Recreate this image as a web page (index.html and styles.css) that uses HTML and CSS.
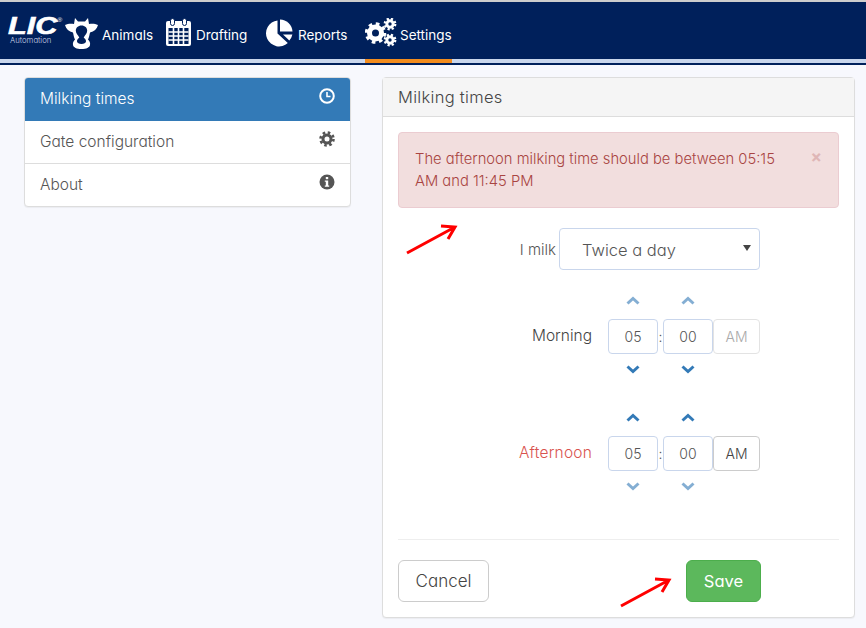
FILE: index.html
```html
<!DOCTYPE html>
<html lang="en">
<head>
  <meta charset="UTF-8">
  <title>Milking times</title>
  <link rel="stylesheet" href="styles.css">
</head>
<body>
  <div class="topbar">
    <div class="logo">
      <span class="logo-lic">LIC<sup class="logo-reg">®</sup></span>
      <span class="logo-sub">Automation</span>
    </div>
    <a class="nav-item nav-animals">
      <svg width="33" height="32" viewBox="0 0 33 32">
        <path fill="#fff" d="M10 1l3 3.500h7l3-3.500 1 6c3-.5 6-.5 9 1-1 4-4 6.500-8 7.500-.5 2.500-1 5-2 7 1.500 1.500 2.500 3.500 2 5.500-.5 2.500-3.500 4-8.500 4s-8-1.500-8.500-4c-.5-2 .5-4 2-5.500-1-2-1.500-4.500-2-7-4-1-7-3.500-8-7.500 3-1.500 6-1.500 9-1z"/>
        <path fill="#00205b" d="M16.500 8.500c3.500 0 5.700 2.300 5.700 5.300 0 3-2.700 4.700-3.500 7 1.600.8 2.500 2.300 2.300 3.700-.2 1.500-2 2.500-4.500 2.500s-4.300-1-4.500-2.500c-.2-1.400.7-2.900 2.300-3.700-.8-2.300-3.500-4-3.500-7 0-3 2.200-5.300 5.700-5.300z"/>
      </svg>
      <span>Animals</span>
    </a>
    <a class="nav-item nav-drafting">
      <svg width="27" height="29" viewBox="0 0 27 29">
        <rect x="1" y="3" width="25" height="25" rx="2" fill="#fff"/>
        <rect x="3.500" y="10" width="20" height="16" fill="#00205b"/>
        <path stroke="#fff" stroke-width="1.600" d="M8.500 10v16M13.500 10v16M18.500 10v16M3.500 14h20M3.500 18h20M3.500 22h20"/>
        <rect x="5.500" y="0.500" width="4" height="7" rx="2" fill="#fff" stroke="#00205b"/>
        <rect x="17.500" y="0.500" width="4" height="7" rx="2" fill="#fff" stroke="#00205b"/>
      </svg>
      <span>Drafting</span>
    </a>
    <a class="nav-item nav-reports">
      <svg width="28" height="28" viewBox="0 0 28 28">
        <path fill="#fff" d="M12.500 1.500A13 13 0 1 0 22.800 24L12.500 14.500z"/>
        <path fill="#fff" d="M15 0.500A13 13 0 0 1 27.500 12.500H15z"/>
        <path fill="#fff" d="M27.400 15.500A13 13 0 0 1 24.300 21.500L18 15.500z"/>
      </svg>
      <span>Reports</span>
    </a>
    <a class="nav-item nav-settings active">
      <svg width="32" height="29" viewBox="0 0 32 29">
        <g fill="none" stroke="#fff">
          <circle cx="10.500" cy="15" r="6" stroke-width="5"/>
          <circle cx="10.500" cy="15" r="9" stroke-width="3.500" stroke-dasharray="3.500 3.570"/>
          <circle cx="25" cy="6" r="3.200" stroke-width="3"/>
          <circle cx="25" cy="6" r="5.300" stroke-width="2.200" stroke-dasharray="2.200 2"/>
          <circle cx="25" cy="22" r="3.200" stroke-width="3"/>
          <circle cx="25" cy="22" r="5.300" stroke-width="2.200" stroke-dasharray="2.200 2"/>
        </g>
      </svg>
      <span>Settings</span>
    </a>
  </div>
  <div class="stripe"></div>

  <div class="content">
    <div class="side-list">
      <a class="side-item active">
        <span>Milking times</span>
        <svg class="side-icon" width="16" height="16" viewBox="0 0 16 16">
          <circle cx="8" cy="8" r="6.800" fill="none" stroke="currentColor" stroke-width="2"/>
          <path d="M8 4v4.500h3.500" fill="none" stroke="currentColor" stroke-width="1.600"/>
        </svg>
      </a>
      <a class="side-item">
        <span>Gate configuration</span>
        <svg class="side-icon" width="16" height="16" viewBox="0 0 16 16">
          <g fill="none" stroke="currentColor">
            <circle cx="8" cy="8" r="4" stroke-width="3"/>
            <circle cx="8" cy="8" r="6.500" stroke-width="2.600" stroke-dasharray="2.550 2.550"/>
          </g>
        </svg>
      </a>
      <a class="side-item">
        <span>About</span>
        <svg class="side-icon" width="16" height="16" viewBox="0 0 16 16">
          <circle cx="8" cy="8" r="7.500" fill="currentColor"/>
          <rect x="6.800" y="3" width="2.400" height="2.200" fill="#fff"/>
          <path d="M5.800 6.500h3.400v5h1v1.300H5.800v-1.300h1V7.800h-1z" fill="#fff"/>
        </svg>
      </a>
    </div>

    <div class="panel">
      <div class="panel-heading">Milking times</div>
      <div class="panel-body">
        <div class="alert">
          <span class="alert-text">The afternoon milking time should be between 05:15 AM and 11:45 PM</span>
          <span class="alert-close">×</span>
        </div>

        <div class="form-row freq-row">
          <label class="freq-label">I milk</label>
          <div class="select-box">
            <span>Twice a day</span>
            <span class="caret"></span>
          </div>
        </div>

        <div class="form-row time-row">
          <label class="time-label">Morning</label>
          <div class="time-grid">
            <svg class="chev up faded" viewBox="0 0 14 9"><path d="M1.500 7.500L7 2.500l5.500 5"/></svg>
            <span></span>
            <svg class="chev up faded" viewBox="0 0 14 9"><path d="M1.500 7.500L7 2.500l5.500 5"/></svg>
            <span></span>
            <div class="time-input">05</div>
            <span class="colon">:</span>
            <div class="time-input">00</div>
            <div class="ampm disabled">AM</div>
            <svg class="chev" viewBox="0 0 14 9"><path d="M1.500 1.500L7 6.500l5.500-5"/></svg>
            <span></span>
            <svg class="chev" viewBox="0 0 14 9"><path d="M1.500 1.500L7 6.500l5.500-5"/></svg>
            <span></span>
          </div>
        </div>

        <div class="form-row time-row">
          <label class="time-label error">Afternoon</label>
          <div class="time-grid">
            <svg class="chev up" viewBox="0 0 14 9"><path d="M1.500 7.500L7 2.500l5.500 5"/></svg>
            <span></span>
            <svg class="chev up" viewBox="0 0 14 9"><path d="M1.500 7.500L7 2.500l5.500 5"/></svg>
            <span></span>
            <div class="time-input">05</div>
            <span class="colon">:</span>
            <div class="time-input">00</div>
            <div class="ampm">AM</div>
            <svg class="chev faded" viewBox="0 0 14 9"><path d="M1.500 1.500L7 6.500l5.500-5"/></svg>
            <span></span>
            <svg class="chev faded" viewBox="0 0 14 9"><path d="M1.500 1.500L7 6.500l5.500-5"/></svg>
            <span></span>
          </div>
        </div>

        <hr class="divider">

        <div class="actions">
          <button class="btn btn-cancel">Cancel</button>
          <button class="btn btn-save">Save</button>
        </div>
      </div>
    </div>
  </div>

  <!-- red annotation arrows drawn over the screenshot -->
  <svg class="arrow arrow-top" width="54" height="32" viewBox="0 0 54 32">
    <path d="M2 30L50 4M36 3l14 1-7 12" fill="none" stroke="#f00" stroke-width="3"/>
  </svg>
  <svg class="arrow arrow-save" width="54" height="32" viewBox="0 0 54 32">
    <path d="M2 30L50 4M36 3l14 1-7 12" fill="none" stroke="#f00" stroke-width="3"/>
  </svg>
</body>
</html>
```

FILE: styles.css
```css
*{margin:0;padding:0;box-sizing:border-box;}

body{background:#f7f8fd;font-family:"Inter","Lato",sans-serif;font-feature-settings:"cv11";font-weight:300;font-size:15.500px;color:#555;position:relative;height:628px;overflow:hidden;}

/* top bar */
.topbar{height:59px;background:#00205b;border-top:2px solid #ccc;display:flex;align-items:stretch;color:#fff;padding-left:8px;}
.logo{width:57px;padding-top:15px;display:flex;flex-direction:column;}
.logo-lic{font-family:"Liberation Sans",sans-serif;font-weight:bold;font-style:italic;font-size:24px;line-height:18px;height:19px;color:#fff;-webkit-text-stroke:.6px #fff;transform:scaleX(1.28);transform-origin:left;}
.logo-reg{font-size:5px;font-style:normal;font-weight:400;-webkit-text-stroke:0;vertical-align:12px;line-height:0;}
.logo-sub{font-size:7.750px;line-height:9px;padding-left:2px;color:#c9d3e6;}
.nav-item{display:flex;align-items:center;gap:4px;font-size:13.500px;font-weight:400;padding-top:9px;}
.nav-item svg{flex:none;margin-top:-5px;}
.nav-animals{width:100px;}
.nav-drafting{width:100px;}
.nav-reports{width:100px;gap:5px;}
.nav-settings{width:87px;gap:3px;}
.stripe{height:6px;background:#00205b;border-top:4px solid #c9d6ec;position:relative;}
.stripe::after{content:"";position:absolute;left:365px;top:-4px;width:87px;height:4px;background:#f28c1e;}

/* page */
.content{display:flex;align-items:flex-start;gap:31px;padding:12px 11px 0 24px;}

.side-list{width:327px;background:#fff;border:1px solid #ddd;border-radius:4px;box-shadow:0 1px 1px rgba(0,0,0,.05);overflow:hidden;}
.side-item{display:flex;justify-content:space-between;height:43px;padding:11px 15px 0 15px;border-bottom:1px solid #ddd;color:#555;line-height:20px;}
.side-item:last-child{border-bottom:none;height:42px;}
.side-item.active{background:#337ab7;color:#fff;height:44px;margin:-1px -1px 0;padding:12px 16px 0;border-bottom:none;}
.side-icon{flex:none;margin-top:-1px;}

.panel{width:473px;background:#fff;border:1px solid #ddd;border-radius:4px;box-shadow:0 1px 1px rgba(0,0,0,.05);}
.panel-heading{height:39px;background:#f5f5f5;border-bottom:1px solid #ddd;padding:9px 15px 0;line-height:20px;font-size:16.500px;letter-spacing:.3px;color:#444;}
.panel-body{padding:15px;height:500px;}

.alert{display:flex;justify-content:space-between;height:76px;background:#f2dede;border:1px solid #ebccd1;border-radius:4px;padding:15px 16px;color:#a94442;line-height:22px;font-size:14.750px;}
.alert-text{width:372px;}
.alert-close{color:#a94442;opacity:.25;font-weight:bold;font-size:17px;line-height:18px;}

.form-row{display:flex;justify-content:flex-end;margin-right:79px;}
.freq-row{margin-top:20px;align-items:center;gap:3px;}
.freq-label{font-size:15px;}
.select-box{width:201px;height:42px;border:1px solid #c9d6ec;border-radius:4px;padding:0 8px 2px 22px;display:flex;justify-content:space-between;align-items:center;font-size:16.500px;color:#555;}
.select-box span:first-child{margin-top:3px;}
.caret{width:0;height:0;border-left:4px solid transparent;border-right:4px solid transparent;border-top:6px solid #444;}

.time-row{margin-top:18px;height:97px;align-items:center;gap:16px;}
.time-row + .time-row{margin-top:20px;}
.time-label{font-size:15.500px;color:#444;margin-bottom:3px;}
.time-label.error{color:#d9534f;letter-spacing:.2px;}
.time-grid{display:grid;grid-template-columns:50px 5px 50px 47px;grid-template-rows:31px 35px 31px;align-items:center;justify-items:center;}
.time-input{width:50px;height:35px;border:1px solid #c9d6ec;border-radius:4px;display:flex;align-items:center;justify-content:center;font-size:14px;color:#555;}
.colon{font-size:14px;line-height:1;color:#555;}
.ampm{width:47px;height:35px;border:1px solid #ccc;border-radius:4px;display:flex;align-items:center;justify-content:center;font-size:14px;color:#444;}
.ampm.disabled{color:#aaa;border-color:#e3e3e3;}
.chev{width:14px;height:9px;fill:none;stroke:#337ab7;stroke-width:3;}
.chev.up{margin-bottom:6px;}
.chev.faded{opacity:.6;}

.divider{border:none;border-top:1px solid #eee;margin-top:37px;}
.actions{display:flex;justify-content:space-between;margin-top:20px;padding-right:78px;}
.btn{height:42px;border-radius:6px;font-family:inherit;font-feature-settings:inherit;font-weight:300;font-size:17px;background:#fff;}
.btn-cancel{width:91px;border:1px solid #ccc;color:#444;}
.btn-save{width:75px;background:#5cb85c;border:1px solid #4cae4c;color:#fff;font-weight:400;font-size:16.500px;}

.arrow{position:absolute;}
.arrow-top{left:405px;top:223px;}
.arrow-save{left:619px;top:576px;}
```
